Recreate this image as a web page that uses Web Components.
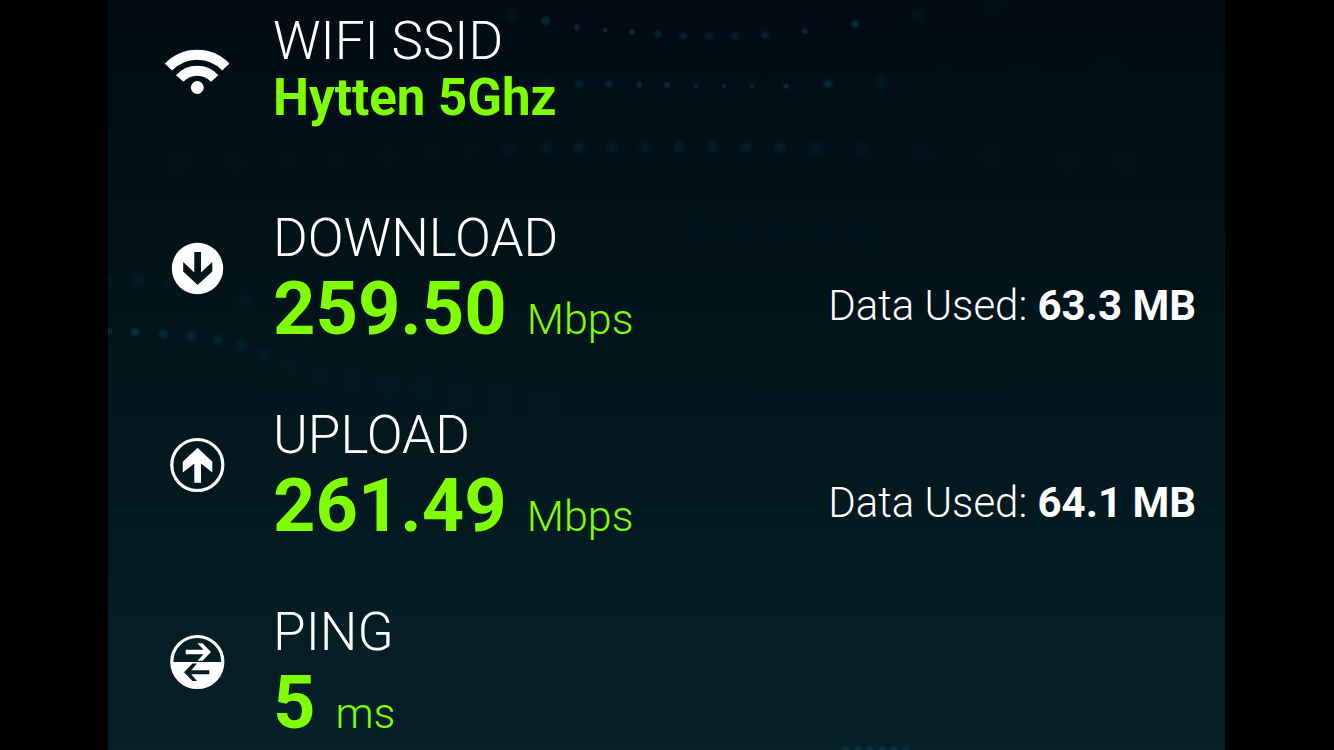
<!DOCTYPE html>
<html lang="en">
<head>
<meta charset="utf-8">
<meta name="viewport" content="width=device-width, initial-scale=1">
<title>Speed test result</title>
<style>
  html { background: #000; }
  body { margin: 0; font-family: Roboto, "Liberation Sans", sans-serif; color: #fff; }
</style>
</head>
<body>
<result-panel>
  <result-row icon="wifi" compact>
    <span slot="label">WIFI SSID</span>
    <span slot="value">Hytten 5Ghz</span>
  </result-row>
  <result-row icon="download">
    <span slot="label">DOWNLOAD</span>
    <span slot="value">259.50</span>
    <span slot="unit">Mbps</span>
    <data-used slot="detail">63.3 MB</data-used>
  </result-row>
  <result-row icon="upload">
    <span slot="label">UPLOAD</span>
    <span slot="value">261.49</span>
    <span slot="unit">Mbps</span>
    <data-used slot="detail">64.1 MB</data-used>
  </result-row>
  <result-row icon="ping">
    <span slot="label">PING</span>
    <span slot="value">5</span>
    <span slot="unit">ms</span>
  </result-row>
</result-panel>

<script>
const ICONS = {
  wifi: `<g fill="none" stroke="#fff" stroke-width="10">
      <path d="M3.5 28A39.5 39.5 0 0 1 60.9 28"/><path d="M14.7 39.5A23.5 23.5 0 0 1 49.7 39.5"/></g>
      <circle cx="32.3" cy="48.5" r="6.4" fill="#fff"/>`,
  download: `<circle cx="32.5" cy="32.5" r="25.7" fill="#fff"/>
      <path d="M29.3 16h6.7v20.5L47.3 26v9.5L32.6 49 18.2 35.5V26l11.1 10.5z" fill="#02151b"/>`,
  upload: `<circle cx="32.3" cy="32" r="25.5" fill="none" stroke="#fff" stroke-width="3.2"/>
      <path d="M29.3 49.7H36V30.5L47.3 39.5V28.8L32.6 14.7 17.8 28.8V39.5L29.3 30.5z" fill="#fff"/>`,
  ping: `<circle cx="32.3" cy="32" r="25.5" fill="none" stroke="#fff" stroke-width="3.2"/>
      <path d="M6.8 32H57.8A25.5 25.5 0 0 1 6.8 32z" fill="#fff"/>
      <path d="M20.7 19.8H38.5L32.5 13.3H37.5L46 22 37.5 30.8H32.5L38.5 24.2H20.7z" fill="#fff"/>
      <path d="M44.3 40.2H26.2L32 33.6H27.5L19 42.2 27.5 51H32L26.2 44.2H44.3z" fill="#051c23"/>`
};

class ResultIcon extends HTMLElement {
  connectedCallback() {
    this.attachShadow({ mode: "open" }).innerHTML = `
      <style>
        :host { display: block; width: 64px; height: 64px; }
        svg { display: block; width: 100%; height: 100%; }
      </style>
      <svg viewBox="0 0 64 64" aria-hidden="true">${ICONS[this.getAttribute("name")]}</svg>`;
  }
}
customElements.define("result-icon", ResultIcon);

class DataUsed extends HTMLElement {
  connectedCallback() {
    this.attachShadow({ mode: "open" }).innerHTML = `
      <style>
        :host { display: block; font-size: 42px; font-weight: 300; line-height: 80px; white-space: nowrap; }
        b { font-weight: 700; }
      </style>
      Data Used: <b><slot></slot></b>`;
  }
}
customElements.define("data-used", DataUsed);

class ResultRow extends HTMLElement {
  connectedCallback() {
    this.attachShadow({ mode: "open" }).innerHTML = `
      <style>
        :host { display: grid; grid-template-columns: 64px 1fr auto; column-gap: 44px;
                grid-template-rows: 56px auto; align-content: start; min-height: 197px; }
        :host(:last-of-type) { min-height: 0; }
        result-icon { grid-row: 1 / 3; margin-top: 26px; }
        .label { grid-column: 2 / 4; font-size: 53px; font-weight: 300; line-height: 56px; }
        .reading { display: flex; align-items: baseline; gap: 20px; color: #80ff00; line-height: 86px; }
        .value { font-size: 74px; font-weight: 700; }
        .unit { font-size: 43px; font-weight: 300; line-height: 48px; }
        .detail { align-self: start; }
        :host([compact]) .reading { line-height: 58px; }
        :host([compact]) .value { font-size: 51px; }
      </style>
      <result-icon name="${this.getAttribute("icon")}"></result-icon>
      <div class="label"><slot name="label"></slot></div>
      <div class="reading">
        <span class="value"><slot name="value"></slot></span>
        <span class="unit"><slot name="unit"></slot></span>
      </div>
      <div class="detail"><slot name="detail"></slot></div>`;
  }
}
customElements.define("result-row", ResultRow);

/* Glowing particle waves: x, y, radius, opacity. */
const DOTS = [
  [404,14,8,.12],[438,21,6,.45],[469,27,4,.5],[497,30,3,.55],[524,32,4,.5],[550,34,5,.4],[575,36,5,.35],
  [601,36,6,.25],[627,36,6,.25],[657,35,5,.4],[697,31,4,.5],[747,24,5,.5],[809,15,9,.12],[886,5,14,.06],
  [438,82,8,.12],[471,84,6,.32],[501,84,5,.45],[531,85,4,.5],[559,85,4,.45],[588,86,3,.5],[616,86,3,.45],
  [644,86,3,.45],[678,86,4,.45],[720,84,6,.45],[773,82,9,.14],[839,79,12,.05],[914,77,16,.04],[999,75,20,.04],
  [70,158,24,.03],[125,158,22,.03],[180,157,20,.03],[230,156,18,.03],[280,155,16,.04],[323,153,14,.05],
  [361,151,12,.05],[401,149,10,.1],[438,147,9,.16],[471,147,8,.22],[504,147,8,.2],[537,147,8,.2],
  [571,147,8,.22],[605,147,8,.22],[638,147,8,.24],[672,147,8,.22],[708,148,9,.16],[754,149,12,.08],
  [814,152,15,.05],[883,155,19,.04],[958,158,22,.03],[1017,158,24,.03],
  [592,227,15,.03],[633,230,15,.04],[673,231,15,.04],[712,232,16,.03],[756,233,17,.03],
  [0,281,8,.12],[31,281,8,.16],[62,282,8,.1],[137,300,9,.06],
  [0,331,5,.45],[27,332,6,.5],[55,334,6,.4],[83,336,7,.35],[110,340,7,.28],[133,346,8,.18],
  [156,355,9,.12],[181,366,10,.05],[212,375,11,.05],[245,380,12,.06],[280,385,13,.06],[315,388,14,.06],
  [352,393,15,.05],[392,398,17,.04],[436,402,19,.03],
  [738,749,5,.3],[750,749,5,.4],[762,749,5,.4],[774,749,5,.4],[786,749,5,.4],[798,749,5,.3]
];

class ResultPanel extends HTMLElement {
  connectedCallback() {
    const dots = DOTS.map(([x, y, r, o]) => `<circle cx="${x}" cy="${y}" r="${r}" opacity="${o}"/>`).join("");
    this.attachShadow({ mode: "open" }).innerHTML = `
      <style>
        :host { display: block; padding-inline: 108px 109px; }
        main { position: relative; box-sizing: border-box; min-height: 100vh; overflow: hidden;
               padding: 13px 29px 0 57px;
               background: linear-gradient(#010c13, #010f16 18%, #02161c 48%, #041b22 75%, #062027); }
        svg { position: absolute; inset: 0; width: 100%; height: 100%; }
        .rows { position: relative; }
      </style>
      <main>
        <svg viewBox="0 0 1117 750" preserveAspectRatio="xMidYMid slice" aria-hidden="true">
          <radialGradient id="glow"><stop offset="0" stop-color="#08556a"/>
            <stop offset=".4" stop-color="#08556a" stop-opacity=".8"/>
            <stop offset="1" stop-color="#08556a" stop-opacity="0"/></radialGradient>
          <g fill="url(#glow)">${dots}</g>
        </svg>
        <div class="rows"><slot></slot></div>
      </main>`;
  }
}
customElements.define("result-panel", ResultPanel);
</script>
</body>
</html>
